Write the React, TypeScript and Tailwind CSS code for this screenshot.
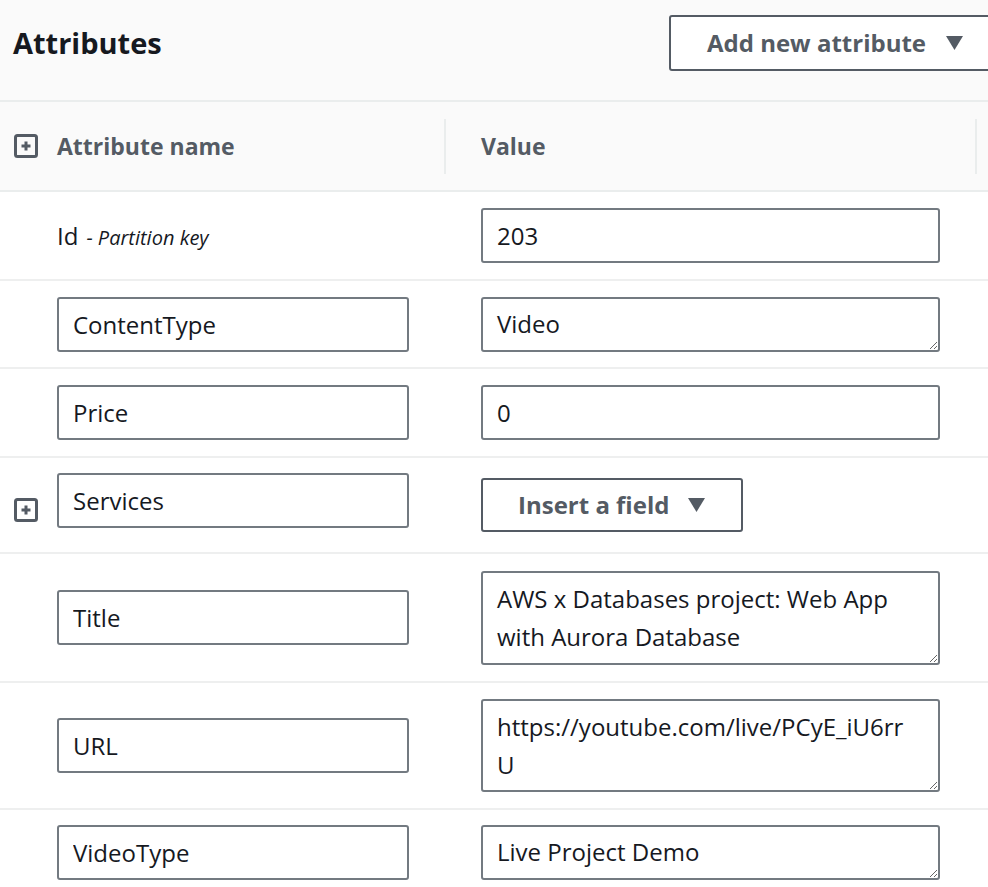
import React from 'react';

// DynamoDB-style "Attributes" editor panel.

const font = { fontFamily: '"Open Sans", "Noto Sans", Arial, sans-serif' };

function Caret({ className = '' }: { className?: string }) {
  return (
    <svg viewBox="0 0 17 14" className={className} aria-hidden>
      <path d="M0 0 H17 L8.5 14 Z" fill="#545b64" />
    </svg>
  );
}

function PlusBox() {
  return (
    <svg viewBox="0 0 24 24" className="w-6 h-6" aria-hidden>
      <rect x="1.5" y="1.5" width="21" height="21" rx="2" fill="none" stroke="#545b64" strokeWidth="3" />
      <path d="M12 7.5 V16.5 M7.5 12 H16.5" stroke="#545b64" strokeWidth="3" />
    </svg>
  );
}

function TextBox({ value, className = '' }: { value: string; className?: string }) {
  return (
    <input
      readOnly
      defaultValue={value}
      className={`h-[55px] rounded-[3px] border-2 border-[#737a81] bg-white px-[14px] text-[24px] text-[#16191f] outline-none ${className}`}
      style={font}
    />
  );
}

function Area({ value, rows = 1, className = '' }: { value: string; rows?: number; className?: string }) {
  return (
    <textarea
      readOnly
      rows={rows}
      defaultValue={value}
      className={`w-[459px] rounded-[3px] border-2 border-[#737a81] bg-white px-[14px] text-[24px] leading-[38px] text-[#16191f] outline-none resize-y overflow-hidden ${className}`}
      style={font}
    />
  );
}

function Row({ h, icon, name, value }: { h: string; icon?: React.ReactNode; name: React.ReactNode; value: React.ReactNode }) {
  return (
    <div className={`flex items-center border-b-2 border-[#eeefef] bg-white ${h}`}>
      <div className="w-[57px] shrink-0 pl-[14px] flex">{icon}</div>
      <div className="w-[389px] shrink-0 flex">{name}</div>
      <div className="pl-[35px] flex">{value}</div>
    </div>
  );
}

export default function App() {
  return (
    <div className="w-[988px] h-[887px] overflow-hidden bg-white text-[#16191f]" style={font}>
      {/* title bar */}
      <div className="flex items-start h-[100px] bg-[#fafafa] pt-[15px]">
        <h2 className="flex-1 pl-[13px] text-[29px] font-bold leading-[56px] text-[#16191f]">Attributes</h2>
        <button className="shrink-0 -mr-[12px] flex items-center w-[331px] h-[56px] rounded-[3px] border-2 border-[#545b64] bg-white pl-[36px] gap-[20px] text-[24px] font-bold text-[#545b64]">
          Add new attribute
          <Caret className="w-[17px] h-[14px]" />
        </button>
      </div>

      {/* column headers */}
      <div className="flex items-center h-[92px] border-y-2 border-[#eaeded] bg-[#fafafa] text-[23px] font-bold text-[#545b64]">
        <div className="w-[57px] shrink-0 pl-[14px] flex">
          <PlusBox />
        </div>
        <div className="w-[387px] shrink-0">Attribute name</div>
        <div className="w-[2px] h-[55px] bg-[#eaeded]" />
        <div className="w-[529px] shrink-0 pl-[35px]">Value</div>
        <div className="w-[2px] h-[55px] bg-[#eaeded]" />
      </div>

      <Row
        h="h-[89px]"
        name={
          <div className="flex items-baseline gap-[8px]">
            <span className="text-[24px]">Id</span>
            <span className="text-[20px] italic">- Partition key</span>
          </div>
        }
        value={<TextBox value="203" className="w-[459px]" />}
      />
      <Row
        h="h-[88px]"
        name={<TextBox value="ContentType" className="w-[352px]" />}
        value={<Area value="Video" className="h-[55px] py-[6px]" />}
      />
      <Row
        h="h-[89px]"
        name={<TextBox value="Price" className="w-[352px]" />}
        value={<TextBox value="0" className="w-[459px]" />}
      />
      <div className="flex items-center h-[96px] border-b-2 border-[#eeefef] bg-white">
        <div className="w-[57px] shrink-0 pl-[14px] flex mt-[10px]">
          <PlusBox />
        </div>
        <div className="w-[389px] shrink-0 flex -mt-[9px]">
          <TextBox value="Services" className="w-[352px]" />
        </div>
        <div className="pl-[35px] flex">
          <button className="flex items-center w-[262px] h-[54px] rounded-[3px] border-2 border-[#545b64] bg-white pl-[35px] gap-[19px] text-[24px] font-bold text-[#545b64]">
            Insert a field
            <Caret className="w-[17px] h-[14px]" />
          </button>
        </div>
      </div>
      <Row
        h="h-[129px]"
        name={<TextBox value="Title" className="w-[352px]" />}
        value={<Area value={'AWS x Databases project: Web App\nwith Aurora Database'} className="h-[94px] py-[7px]" />}
      />
      <Row
        h="h-[127px]"
        name={<TextBox value="URL" className="w-[352px]" />}
        value={<Area value={'https://youtube.com/live/PCyE_iU6rr\nU'} className="h-[93px] py-[7px]" />}
      />
      <div className="flex items-start h-[120px] bg-white pt-[15px]">
        <div className="w-[57px] shrink-0" />
        <div className="w-[389px] shrink-0 flex">
          <TextBox value="VideoType" className="w-[352px]" />
        </div>
        <div className="pl-[35px] flex">
          <Area value="Live Project Demo" className="h-[55px] py-[6px]" />
        </div>
      </div>
    </div>
  );
}
